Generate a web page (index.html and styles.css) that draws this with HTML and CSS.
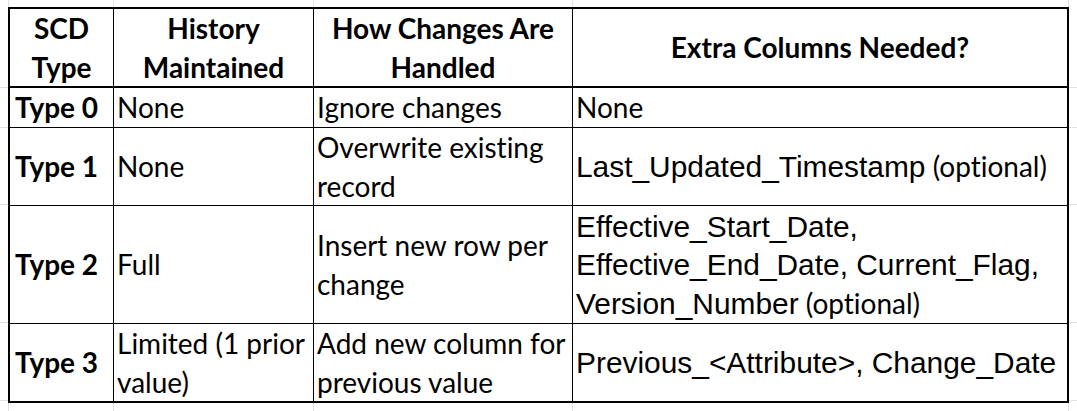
FILE: index.html
```html
<!DOCTYPE html>
<html lang="en">
<head>
<meta charset="utf-8">
<title>SCD Types</title>
<link rel="stylesheet" href="styles.css">
</head>
<body>
<div class="sheet">
  <table class="scd">
    <colgroup>
      <col class="c1"><col class="c2"><col class="c3"><col class="c4">
    </colgroup>
    <thead>
      <tr class="r-head">
        <th>SCD<br>Type</th>
        <th>History<br>Maintained</th>
        <th>How Changes Are<br>Handled</th>
        <th>Extra Columns Needed?</th>
      </tr>
    </thead>
    <tbody>
      <tr class="r0">
        <td class="label">Type 0</td>
        <td>None</td>
        <td>Ignore changes</td>
        <td>None</td>
      </tr>
      <tr class="r1">
        <td class="label">Type 1</td>
        <td>None</td>
        <td>Overwrite existing<br>record</td>
        <td><span class="ar">Last_Updated_Timestamp</span> (optional)</td>
      </tr>
      <tr class="r2">
        <td class="label">Type 2</td>
        <td>Full</td>
        <td>Insert new row per<br>change</td>
        <td><span class="ar">Effective_Start_Date,<br>Effective_End_Date, Current_Flag,<br>Version_Number</span> (optional)</td>
      </tr>
      <tr class="r3">
        <td class="label">Type 3</td>
        <td>Limited (1 prior<br>value)</td>
        <td>Add new column for<br>previous value</td>
        <td><span class="ar">Previous_&lt;Attribute&gt;, Change_Date</span></td>
      </tr>
    </tbody>
  </table>
</div>
</body>
</html>
```

FILE: styles.css
```css
html, body {
  margin: 0;
  padding: 0;
  background: #ffffff;
}

.sheet {
  width: 1077px;
  height: 411px;
  box-sizing: border-box;
  padding: 7px 0 0 8px;
  background:
    linear-gradient(#e2e2e2, #e2e2e2) 8px 0 / 1px 100% no-repeat,
    linear-gradient(#e2e2e2, #e2e2e2) 113px 0 / 1px 100% no-repeat,
    linear-gradient(#e2e2e2, #e2e2e2) 313px 0 / 1px 100% no-repeat,
    linear-gradient(#e2e2e2, #e2e2e2) 572px 0 / 1px 100% no-repeat,
    linear-gradient(#e2e2e2, #e2e2e2) 1068px 0 / 1px 100% no-repeat,
    linear-gradient(#e2e2e2, #e2e2e2) 0 87px / 100% 1px no-repeat,
    linear-gradient(#e2e2e2, #e2e2e2) 0 127px / 100% 1px no-repeat,
    linear-gradient(#e2e2e2, #e2e2e2) 0 204px / 100% 1px no-repeat,
    linear-gradient(#e2e2e2, #e2e2e2) 0 322px / 100% 1px no-repeat,
    linear-gradient(#e2e2e2, #e2e2e2) 0 400px / 100% 1px no-repeat,
    #ffffff;
  font-family: "Lato", "Noto Sans", sans-serif;
  font-size: 28px;
  font-variant-ligatures: none;
  color: #000;
}

.scd {
  border-collapse: separate;
  border-spacing: 0;
  border: 2px solid #000;
  table-layout: fixed;
  width: 1061px;
  background: #fff;
}

.c1 { width: 104px; }
.c2 { width: 200px; }
.c3 { width: 259px; }
.c4 { width: 494px; }

.scd th,
.scd td {
  box-sizing: border-box;
  border-right: 1px solid #000;
  border-bottom: 1px solid #000;
  padding: 0 0 0 3px;
  vertical-align: middle;
  line-height: 38.5px;
  white-space: nowrap;
  overflow: hidden;
}

.scd th:last-child,
.scd td:last-child {
  border-right: 0;
}

.scd tbody tr:last-child td {
  border-bottom: 0;
}

.scd th {
  font-weight: 700;
  text-align: center;
  padding: 0;
  border-bottom: 2px solid #000;
  height: 79px;
}

.scd td.label {
  font-weight: 700;
  padding-left: 5px;
}

.r0 td { height: 40px; }
.r1 td { height: 77px; }
.r2 td { height: 118px; }
.r3 td { height: 76px; }

.ar {
  font-family: "Liberation Sans", Arial, sans-serif;
  font-size: 29.9px;
  line-height: 28px;
}
```
